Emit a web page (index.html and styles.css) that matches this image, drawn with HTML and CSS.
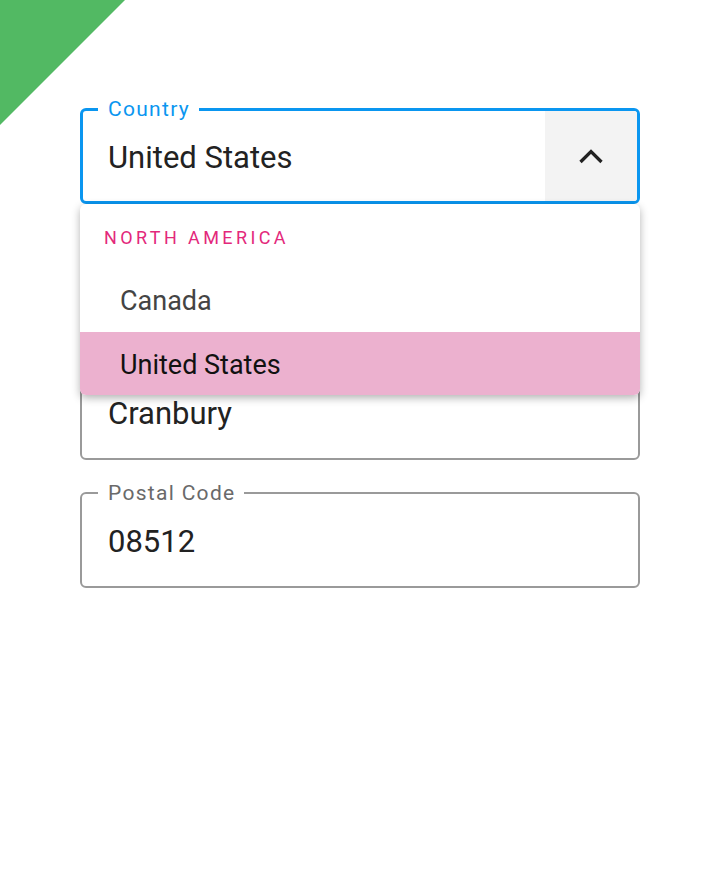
FILE: index.html
```html
<!DOCTYPE html>
<html lang="en">
<head>
<meta charset="utf-8">
<title>Address form</title>
<link rel="stylesheet" href="styles.css">
</head>
<body>
<div class="corner"></div>
<main class="form">
  <div class="field field--focused">
    <span class="field__label">Country</span>
    <div class="field__value">United States</div>
    <div class="field__toggle">
      <svg class="chevron" width="24" height="16" viewBox="0 0 24 16"><polyline points="1.5,14 12,3.5 22.5,14"/></svg>
    </div>
    <ul class="menu">
      <li class="menu__group">NORTH AMERICA</li>
      <li class="menu__item">Canada</li>
      <li class="menu__item menu__item--active">United States</li>
    </ul>
  </div>
  <div class="field field--covered"></div>
  <div class="field">
    <div class="field__value">Cranbury</div>
  </div>
  <div class="field">
    <span class="field__label">Postal Code</span>
    <div class="field__value">08512</div>
  </div>
</main>
</body>
</html>
```
FILE: styles.css
```css
html, body {
  margin: 0;
  padding: 0;
  background: #ffffff;
}

body {
  font-family: Roboto, "Noto Sans", sans-serif;
  color: #222222;
}

.corner {
  position: absolute;
  top: 0;
  left: 0;
  width: 125px;
  height: 125px;
  background: #52b963;
  clip-path: polygon(0 0, 100% 0, 0 100%);
}

.form {
  display: flex;
  flex-direction: column;
  gap: 32px;
  width: 560px;
  padding: 108px 80px 0;
}

.field {
  position: relative;
  box-sizing: border-box;
  height: 96px;
  display: flex;
  align-items: stretch;
  border: 2px solid #9a9a9a;
  border-radius: 6px;
  background: #ffffff;
}

.field--focused {
  border: 3px solid #0a96f0;
  z-index: 2;
}

.field__label {
  position: absolute;
  top: -11px;
  left: 16px;
  padding: 0 9px 0 10px;
  background: #ffffff;
  font-size: 21px;
  line-height: 20px;
  letter-spacing: 1.3px;
  color: #6a6a6a;
}

.field--focused .field__label {
  top: -12px;
  left: 15px;
  color: #0a96f0;
}

.field__value {
  flex: 1;
  display: flex;
  align-items: center;
  padding: 2px 0 0 26px;
  font-size: 31px;
  line-height: 1;
  color: #222222;
}

.field--focused .field__value {
  padding-left: 25px;
}

.field__toggle {
  width: 92px;
  display: flex;
  align-items: center;
  justify-content: center;
  background: #f3f3f3;
  border-radius: 0 3px 3px 0;
}

.chevron polyline {
  fill: none;
  stroke: #222222;
  stroke-width: 3.3;
  stroke-linejoin: miter;
}

.menu {
  position: absolute;
  top: calc(100% + 3px);
  left: -3px;
  right: -3px;
  margin: 0;
  padding: 0;
  list-style: none;
  background: #ffffff;
  border-radius: 6px;
  overflow: hidden;
  box-shadow: 0 3px 8px rgba(0, 0, 0, 0.3);
}

.menu__group,
.menu__item {
  box-sizing: border-box;
  display: flex;
  align-items: center;
  line-height: 1;
  padding-top: 3px;
}

.menu__group {
  height: 64px;
  padding-left: 24px;
  font-size: 18px;
  letter-spacing: 3.4px;
  color: #e3287b;
}

.menu__item {
  height: 64px;
  padding-left: 40px;
  font-size: 27px;
  color: #444444;
}

.menu__item--active {
  height: 63px;
  background: #ecb1cf;
  color: #111111;
}
```
